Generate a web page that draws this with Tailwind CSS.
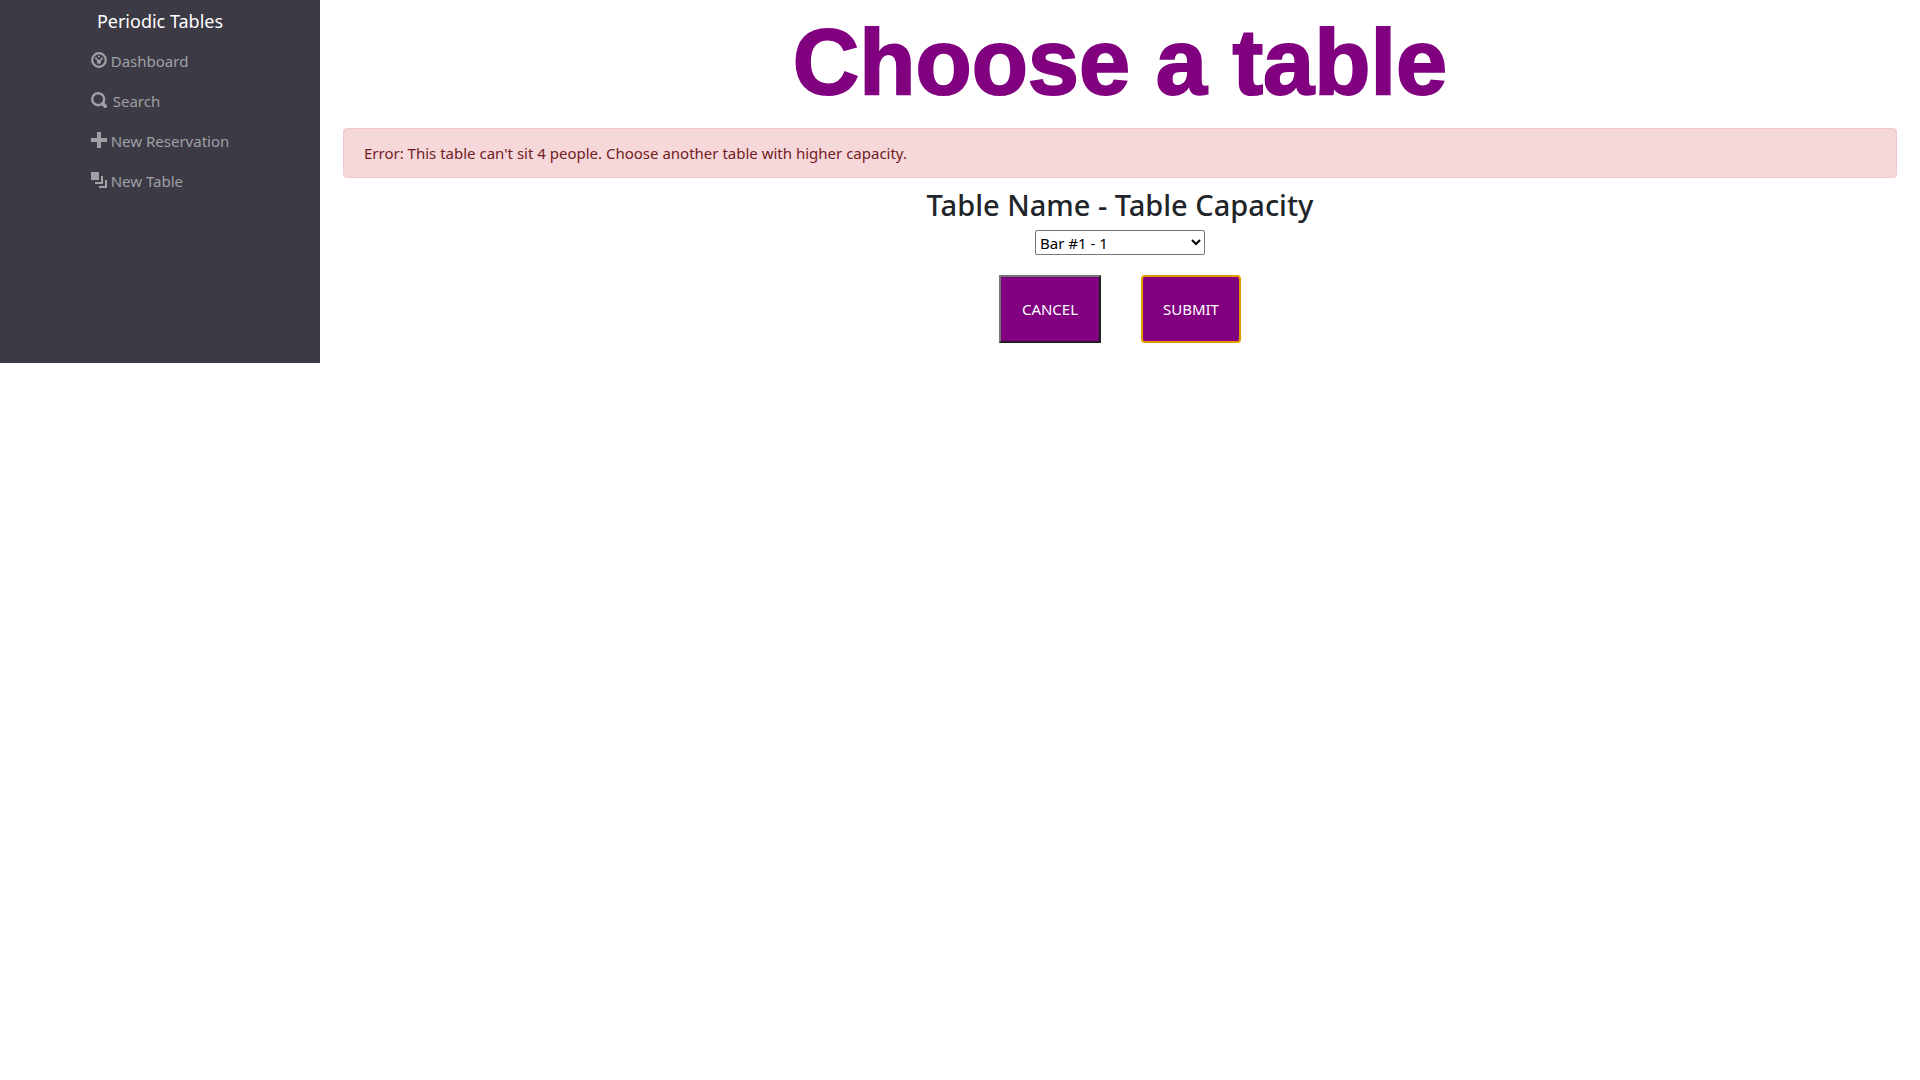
<!DOCTYPE html>
<html lang="en">
<head>
<meta charset="utf-8">
<meta name="viewport" content="width=device-width, initial-scale=1">
<title>Periodic Tables</title>
<script src="https://cdn.jsdelivr.net/npm/@tailwindcss/browser@4"></script>
</head>
<body class="bg-white font-['Segoe_UI','Noto_Sans',sans-serif] text-[15px] leading-6 text-[#212529]">
<div class="flex">
  <nav class="flex w-1/6 flex-col items-center bg-[#3c3a44]">
    <a href="#" class="pt-[7px] pb-1.5 text-lg leading-7 text-white">Periodic Tables</a>
    <ul class="text-[#a0a0a5]">
      <li><a href="#" class="flex gap-1 py-2"><svg class="mt-[3px] size-4" viewBox="0 0 16 16" fill="currentColor" aria-hidden="true"><circle cx="8" cy="8" r="6.800" fill="none" stroke="currentColor" stroke-width="2.200"/><circle cx="8" cy="4.600" r="1"/><circle cx="4.900" cy="6.300" r="1"/><circle cx="11.100" cy="6.300" r="1"/><path d="M4.500 7.100 5.600 6l2.200 2h.5l2.200-2 1.100 1.100-1.800 2A2 2 0 1 1 6.200 9z"/></svg>Dashboard</a></li>
      <li><a href="#" class="flex gap-1.5 py-2"><svg class="mt-[3px] size-4" viewBox="0 0 16 16" fill="none" stroke="currentColor" aria-hidden="true"><circle cx="7.200" cy="7.200" r="6" stroke-width="2.400"/><path d="m12 12 2.300 2.300" stroke-width="3.600" stroke-linecap="round"/></svg>Search</a></li>
      <li><a href="#" class="flex gap-1 py-2"><svg class="mt-[3px] size-4" viewBox="0 0 16 16" fill="currentColor" aria-hidden="true"><path d="M6 0v6H0v4h6v6h4v-6h6V6h-6V0z"/></svg>New Reservation</a></li>
      <li><a href="#" class="flex gap-1 py-2"><svg class="mt-[3px] size-4" viewBox="0 0 16 16" fill="currentColor" aria-hidden="true"><path d="M0 0h8v8H0zM10 4h2v8H4v-2h6zM14 8h2v8H8v-2h6z"/></svg>New Table</a></li>
    </ul>
  </nav>
  <main class="flex-1 px-[23px] pb-5 text-center">
    <h1 class="mb-2 pt-1.5 pb-0.5 font-['Liberation_Sans',Arial,sans-serif] text-[92px] leading-[112px] font-bold text-[purple] [-webkit-text-stroke:2px_purple]">Choose a table</h1>
    <div role="alert" class="mb-2 rounded border border-[#f5c6cb] bg-[#f6d7da] px-5 py-3 text-left text-[#721c24]">Error: This table can't sit 4 people. Choose another table with higher capacity.</div>
    <form>
      <label for="table" class="mb-1.5 block text-[29px] leading-[38px] font-medium">Table Name - Table Capacity</label>
      <select id="table" class="mx-auto block h-[25px] w-[170px] rounded-xs border border-[#767676] bg-white text-[15px] leading-5 text-black"><option>Bar #1 - 1</option></select>
      <div class="mt-5 flex justify-center gap-10">
        <button type="button" class="h-[68px] w-[102px] border-2 border-t-[#767676] border-r-[#212121] border-b-[#212121] border-l-[#767676] bg-[purple] text-white">CANCEL</button>
        <button type="submit" class="h-[68px] w-[100px] rounded-sm border-2 border-[#e59700] bg-[purple] text-white">SUBMIT</button>
      </div>
    </form>
  </main>
</div>
</body>
</html>
